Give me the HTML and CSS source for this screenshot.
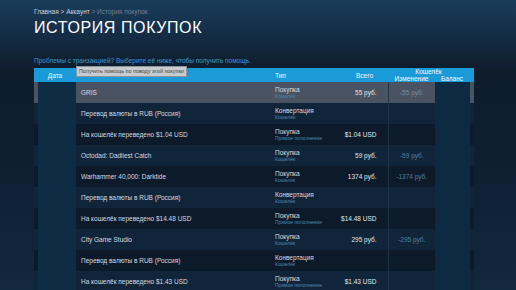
FILE: index.html
```html
<!DOCTYPE html>
<html lang="ru">
<head>
  <meta charset="UTF-8">
  <title>История покупок</title>
  <link rel="stylesheet" href="styles.css">
</head>
<body>
  <div class="page">
    <div class="breadcrumbs">
      <a href="#">Главная</a> &gt; <a href="#">Аккаунт</a> <span class="current">&gt; История покупок</span>
    </div>
    <h1 class="title">История покупок</h1>
    <a class="help-link" href="#">Проблемы с транзакцией? Выберите её ниже, чтобы получить помощь.</a>

    <div class="table-wrap">
      <div class="tooltip">Получить помощь по поводу этой покупки</div>
      <table class="history">
        <colgroup>
          <col class="c-date">
          <col class="c-item">
          <col class="c-type">
          <col class="c-total">
          <col class="c-change">
          <col class="c-balance">
          <col class="c-end">
        </colgroup>
        <thead>
          <tr>
            <th class="date" rowspan="2">Дата</th>
            <th rowspan="2"></th>
            <th class="type" rowspan="2">Тип</th>
            <th class="total" rowspan="2">Всего</th>
            <th class="wallet" colspan="2">Кошелёк</th>
            <th rowspan="2"></th>
          </tr>
          <tr>
            <th class="sub">Изменение</th>
            <th class="sub">Баланс</th>
          </tr>
        </thead>
        <tbody>
          <tr class="hover">
            <td class="date"></td>
            <td class="item">GRIS</td>
            <td class="type">Покупка<span>Кошелёк</span></td>
            <td class="total">55 руб.</td>
            <td class="change">-55 руб.</td>
            <td class="balance"></td>
            <td></td>
          </tr>
          <tr>
            <td class="date"></td>
            <td class="item">Перевод валюты в RUB (Россия)</td>
            <td class="type">Конвертация<span>Кошелёк</span></td>
            <td class="total"></td>
            <td class="change"></td>
            <td class="balance"></td>
            <td></td>
          </tr>
          <tr>
            <td class="date"></td>
            <td class="item">На кошелёк переведено $1.04 USD</td>
            <td class="type">Покупка<span>Прямое пополнение</span></td>
            <td class="total">$1.04 USD</td>
            <td class="change"></td>
            <td class="balance"></td>
            <td></td>
          </tr>
          <tr>
            <td class="date"></td>
            <td class="item">Octodad: Dadliest Catch</td>
            <td class="type">Покупка<span>Кошелёк</span></td>
            <td class="total">59 руб.</td>
            <td class="change">-59 руб.</td>
            <td class="balance"></td>
            <td></td>
          </tr>
          <tr>
            <td class="date"></td>
            <td class="item">Warhammer 40,000: Darktide</td>
            <td class="type">Покупка<span>Кошелёк</span></td>
            <td class="total">1374 руб.</td>
            <td class="change">-1374 руб.</td>
            <td class="balance"></td>
            <td></td>
          </tr>
          <tr>
            <td class="date"></td>
            <td class="item">Перевод валюты в RUB (Россия)</td>
            <td class="type">Конвертация<span>Кошелёк</span></td>
            <td class="total"></td>
            <td class="change"></td>
            <td class="balance"></td>
            <td></td>
          </tr>
          <tr>
            <td class="date"></td>
            <td class="item">На кошелёк переведено $14.48 USD</td>
            <td class="type">Покупка<span>Прямое пополнение</span></td>
            <td class="total">$14.48 USD</td>
            <td class="change"></td>
            <td class="balance"></td>
            <td></td>
          </tr>
          <tr>
            <td class="date"></td>
            <td class="item">City Game Studio</td>
            <td class="type">Покупка<span>Кошелёк</span></td>
            <td class="total">295 руб.</td>
            <td class="change">-295 руб.</td>
            <td class="balance"></td>
            <td></td>
          </tr>
          <tr>
            <td class="date"></td>
            <td class="item">Перевод валюты в RUB (Россия)</td>
            <td class="type">Конвертация<span>Кошелёк</span></td>
            <td class="total"></td>
            <td class="change"></td>
            <td class="balance"></td>
            <td></td>
          </tr>
          <tr>
            <td class="date"></td>
            <td class="item">На кошелёк переведено $1.43 USD</td>
            <td class="type">Покупка<span>Прямое пополнение</span></td>
            <td class="total">$1.43 USD</td>
            <td class="change"></td>
            <td class="balance"></td>
            <td></td>
          </tr>
        </tbody>
      </table>
    </div>
  </div>
</body>
</html>
```

FILE: styles.css
```css
body {
  margin: 0;
  height: 290px;
  overflow: hidden;
  background: linear-gradient(180deg, #1a3d5c 0, #12283f 45px, #0e1c2c 70px, #0f2034 180px, #12283d 290px);
  color: #c6d4df;
  font-family: "Liberation Sans", Arial, sans-serif;
}

.page {
  padding: 0 42px 0 34px;
}

.breadcrumbs {
  padding-top: 8px;
  font-size: 6.5px;
  line-height: 8px;
  color: #c6d4df;
}

.breadcrumbs a {
  color: #c6d4df;
  text-decoration: none;
}

.breadcrumbs .current {
  color: #6e8296;
}

.title {
  margin: 3px 0 20px;
  font-size: 16px;
  line-height: 18px;
  font-weight: normal;
  color: #ffffff;
  text-transform: uppercase;
  letter-spacing: 0.6px;
}

.help-link {
  display: block;
  font-size: 6.5px;
  line-height: 8px;
  color: #3f97d4;
  text-decoration: none;
  margin-bottom: 3px;
}

.table-wrap {
  position: relative;
}

.tooltip {
  position: absolute;
  left: 42px;
  top: -2px;
  padding: 1px 2px;
  background: #c8ccd0;
  border: 1px solid #8d959c;
  color: #3b3f44;
  font-size: 5.4px;
  line-height: 7px;
  z-index: 2;
}

.history {
  width: 440px;
  table-layout: fixed;
  border-collapse: collapse;
  font-size: 6.5px;
}

.c-date { width: 42px; }
.c-item { width: 194px; }
.c-type { width: 67px; }
.c-total { width: 51px; }
.c-change { width: 47px; }
.c-balance { width: 34px; }
.c-end { width: 5px; }

.history thead tr {
  height: 7px;
  background: #1b9ad8;
}

.history th {
  color: #f2f9fd;
  font-weight: normal;
  font-size: 6.5px;
  height: 7px;
  padding: 0;
  line-height: 7px;
  overflow: hidden;
}

.history th.date {
  text-align: center;
}

.history th.type {
  text-align: left;
  padding-left: 5px;
}

.history th.total {
  text-align: right;
  padding-right: 15px;
}

.history th.wallet {
  text-align: center;
}

.history th.sub {
  text-align: center;
}

.history tbody tr {
  height: 21px;
  background: #0c1a2a;
}

.history tbody tr:nth-child(even) {
  background: #11253a;
}

.history tbody tr.hover {
  background: #4a5362;
}

.history td {
  padding: 0;
  vertical-align: middle;
  white-space: nowrap;
}

.history td.date {
  background: linear-gradient(90deg, transparent 4px, #0f2c45 4px);
}

.history td.item {
  padding-left: 5px;
  color: #d2dce4;
}

.history td.type {
  padding-left: 5px;
  color: #d2dce4;
  line-height: 7px;
}

.history td.type span {
  display: block;
  font-size: 5px;
  line-height: 6px;
  color: #4e86ad;
}

.history td.total {
  text-align: right;
  padding-right: 11px;
  color: #e0e8ee;
  border-right: 1px solid #1f3448;
}

.history td.change {
  text-align: center;
  color: #56809f;
}

.history tr.hover td.change {
  color: #7d8b99;
}

.history td.balance {
  background: #0d2a43;
  border-right: 1px solid #162a3d;
}
```
